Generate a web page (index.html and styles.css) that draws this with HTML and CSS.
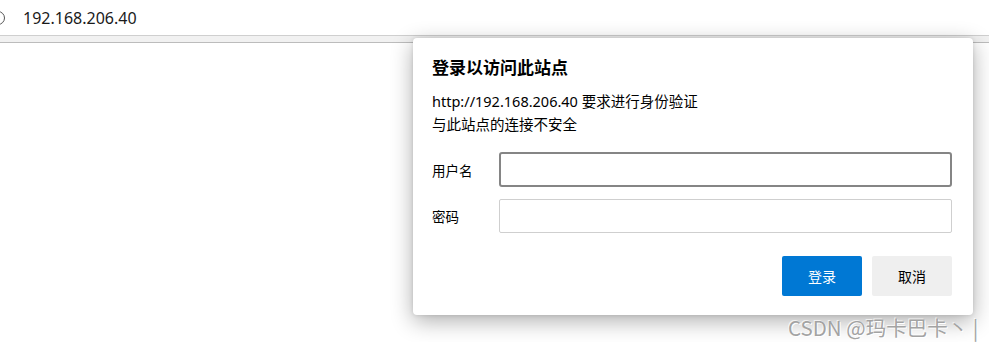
FILE: index.html
```html
<!DOCTYPE html>
<html lang="zh-CN">
<head>
<meta charset="utf-8">
<link rel="stylesheet" href="styles.css">
</head>
<body>
<div class="topbar">
  <span class="info-icon"></span>
  <span class="address">192.168.206.40</span>
</div>
<div class="toolbar-band"></div>
<div class="dialog">
  <h1 class="title">登录以访问此站点</h1>
  <p class="desc">http://192.168.206.40 要求进行身份验证<br>与此站点的连接不安全</p>
  <div class="form">
    <div class="row">
      <label class="label">用户名</label>
      <div class="input focused"></div>
    </div>
    <div class="row">
      <label class="label">密码</label>
      <div class="input"></div>
    </div>
  </div>
  <div class="actions">
    <button class="btn primary">登录</button>
    <button class="btn secondary">取消</button>
  </div>
</div>
<div class="watermark">CSDN @玛卡巴卡丶 |</div>
</body>
</html>
```
FILE: styles.css
```css
* { box-sizing: border-box; }
html, body { margin: 0; padding: 0; }
body {
  width: 989px;
  height: 342px;
  background: #fff;
  font-family: "Segoe UI", "Noto Sans", "Noto Sans CJK SC", sans-serif;
  position: relative;
  overflow: hidden;
  color: #000;
}
.topbar {
  height: 35px;
  display: flex;
  align-items: center;
  background: #fff;
}
.info-icon {
  width: 14px;
  height: 14px;
  border: 1.5px solid #555;
  border-radius: 50%;
  margin-left: -9px;
  margin-right: 18px;
}
.address {
  font-size: 16px;
  color: #1a1a1a;
  font-family: "Noto Sans", sans-serif;
  letter-spacing: 0;
}
.toolbar-band {
  height: 8px;
  background: #f1f1f1;
  border-top: 1px solid #cfcfcf;
  border-bottom: 1px solid #bcbcbc;
}
.dialog {
  position: absolute;
  left: 413px;
  top: 38px;
  width: 560px;
  background: #fff;
  border-radius: 4px;
  box-shadow: 0 6px 22px rgba(0,0,0,0.32), 0 0 4px rgba(0,0,0,0.12);
  padding: 18px 21px 19px 19px;
  font-family: "Noto Sans", "Noto Sans CJK SC", sans-serif;
}
.title {
  margin: 0;
  font-size: 17px;
  font-weight: 700;
  line-height: 24px;
}
.desc {
  margin: 10px 0 0;
  font-size: 14.5px;
  line-height: 23px;
}
.form {
  margin-top: 16px;
  display: flex;
  flex-direction: column;
  gap: 12px;
}
.row {
  display: flex;
  align-items: center;
}
.label {
  width: 67px;
  font-size: 13.5px;
  flex: none;
}
.input {
  flex: 1;
  height: 34px;
  border: 1px solid #cfcfcf;
  border-radius: 2px;
  background: #fff;
}
.input.focused {
  height: 35px;
  border: 2px solid #858585;
  border-radius: 3px;
}
.actions {
  margin-top: 23px;
  display: flex;
  justify-content: flex-end;
  gap: 10px;
}
.btn {
  width: 80px;
  height: 40px;
  border: none;
  border-radius: 2px;
  font-family: "Noto Sans", "Noto Sans CJK SC", sans-serif;
  font-size: 14px;
  padding: 0;
}
.primary { background: #0078d4; color: #fff; }
.secondary { background: #efefef; color: #000; }
.watermark {
  position: absolute;
  left: 788px;
  top: 312px;
  font-family: "Noto Sans CJK SC", sans-serif;
  font-size: 20.5px;
  color: #a3a3a3;
  text-shadow: 1px 1px 0 #fff, -1px -1px 0 rgba(255,255,255,0.7);
  white-space: nowrap;
}
```
